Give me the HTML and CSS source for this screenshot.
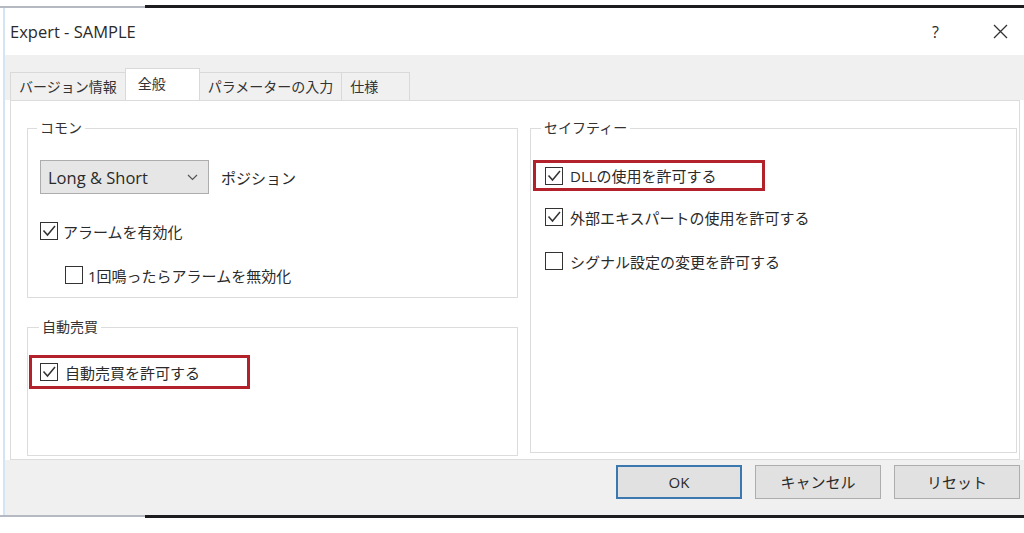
FILE: index.html
```html
<!DOCTYPE html>
<html lang="ja">
<head>
<meta charset="UTF-8">
<meta name="viewport" content="width=device-width, initial-scale=1.0">
<title>Expert - SAMPLE</title>
<link rel="stylesheet" href="styles.css">
</head>
<body>
  <div class="screen-edge top"><span class="seg-light"></span><span class="seg-dark"></span></div>

  <div class="dialog">
    <div class="titlebar">
      <span class="title">Expert - SAMPLE</span>
      <span class="tb-help">?</span>
      <svg class="tb-close" width="15" height="15" viewBox="0 0 15 15">
        <path d="M1 1 L14 14 M14 1 L1 14" stroke="#333" stroke-width="1.3" fill="none"/>
      </svg>
    </div>

    <div class="tabs">
      <div class="tab">バージョン情報</div>
      <div class="tab active">全般</div>
      <div class="tab">パラメーターの入力</div>
      <div class="tab">仕様</div>
    </div>

    <div class="panel">
      <div class="col-left">
        <fieldset class="group common">
          <legend>コモン</legend>
          <div class="select-row">
            <div class="select">
              <span>Long &amp; Short</span>
              <svg width="11" height="7" viewBox="0 0 11 7"><path d="M1 1 L5.5 5.5 L10 1" stroke="#555" stroke-width="1.2" fill="none"/></svg>
            </div>
            <span class="select-label">ポジション</span>
          </div>
          <div class="row first">
            <svg class="cb" width="18" height="18" viewBox="0 0 18 18"><rect x="0.5" y="0.5" width="17" height="17" fill="#fff" stroke="#333"/><path d="M3.5 8.5 L7.5 13 L15 4" stroke="#333" stroke-width="1.5" fill="none"/></svg>
            <span>アラームを有効化</span>
          </div>
          <div class="row sub">
            <svg class="cb" width="18" height="18" viewBox="0 0 18 18"><rect x="0.5" y="0.5" width="17" height="17" fill="#fff" stroke="#333"/></svg>
            <span>1回鳴ったらアラームを無効化</span>
          </div>
        </fieldset>

        <fieldset class="group auto">
          <legend>自動売買</legend>
          <div class="hl hl-auto">
            <svg class="cb" width="18" height="18" viewBox="0 0 18 18"><rect x="0.5" y="0.5" width="17" height="17" fill="#fff" stroke="#333"/><path d="M3.5 8.5 L7.5 13 L15 4" stroke="#333" stroke-width="1.5" fill="none"/></svg>
            <span>自動売買を許可する</span>
          </div>
        </fieldset>
      </div>

      <fieldset class="group safety">
        <legend>セイフティー</legend>
        <div class="hl hl-dll">
          <svg class="cb" width="18" height="18" viewBox="0 0 18 18"><rect x="0.5" y="0.5" width="17" height="17" fill="#fff" stroke="#333"/><path d="M3.5 8.5 L7.5 13 L15 4" stroke="#333" stroke-width="1.5" fill="none"/></svg>
          <span>DLLの使用を許可する</span>
        </div>
        <div class="row second">
          <svg class="cb" width="18" height="18" viewBox="0 0 18 18"><rect x="0.5" y="0.5" width="17" height="17" fill="#fff" stroke="#333"/><path d="M3.5 8.5 L7.5 13 L15 4" stroke="#333" stroke-width="1.5" fill="none"/></svg>
          <span>外部エキスパートの使用を許可する</span>
        </div>
        <div class="row third">
          <svg class="cb" width="18" height="18" viewBox="0 0 18 18"><rect x="0.5" y="0.5" width="17" height="17" fill="#fff" stroke="#333"/></svg>
          <span>シグナル設定の変更を許可する</span>
        </div>
      </fieldset>
    </div>

    <div class="footer">
      <div class="btn default">OK</div>
      <div class="btn">キャンセル</div>
      <div class="btn">リセット</div>
    </div>
  </div>

  <div class="screen-edge bottom"><span class="seg-light"></span><span class="seg-dark"></span></div>
</body>
</html>
```

FILE: styles.css
```css
body {
  margin: 0;
  width: 1024px;
  height: 533px;
  overflow: hidden;
  background: #fff;
  font-family: "Open Sans", "Noto Sans CJK JP", sans-serif;
  color: #2a2a2a;
}

/* strips of the desktop above and below the dialog */
.screen-edge {
  display: flex;
}
.screen-edge.top {
  height: 8px;
  align-items: flex-end;
}
.screen-edge.bottom {
  height: 18px;
  align-items: flex-start;
}
.seg-light {
  width: 145px;
  height: 2px;
  background: #b4b9c2;
}
.seg-dark {
  flex: 1;
  height: 3px;
  background: #1d1d1f;
}

.dialog {
  margin-left: 3px;
  border-left: 2px solid #d3e5f2;
}

.titlebar {
  height: 47px;
  background: #fff;
  display: flex;
  align-items: center;
  padding: 0 16px 0 5px;
  font-size: 16.5px;
}
.tb-help {
  margin-left: auto;
  margin-right: 54px;
  font-size: 16px;
}

.tabs {
  height: 45px;
  background: #f0f0f0;
  display: flex;
  align-items: flex-end;
  padding-left: 5px;
}
.tab {
  box-sizing: border-box;
  height: 28px;
  min-width: 69px;
  padding: 0 8px;
  margin-right: -1px;
  border: 1px solid #d9d9d9;
  border-bottom: none;
  background: #f0f0f0;
  font-size: 14px;
  line-height: 27px;
  color: #333;
}
.tab.active {
  height: 32px;
  min-width: 75px;
  padding-left: 12px;
  background: #fff;
  line-height: 30px;
  position: relative;
  z-index: 1;
}

.panel {
  box-sizing: border-box;
  height: 360px;
  margin: 0 4px 0 5px;
  padding: 17px 0 0 16px;
  background: #fff;
  border: 1px solid #dcdcdc;
  display: flex;
  gap: 12px;
}
.col-left {
  width: 491px;
  display: flex;
  flex-direction: column;
}

.group {
  box-sizing: border-box;
  margin: 0;
  min-width: 0;
  border: 1px solid #dcdcdc;
  padding: 0;
}
.group legend {
  font-size: 14px;
  line-height: 20px;
  padding: 0 3px;
  color: #333;
}

.common {
  height: 180px;
  padding: 22px 0 0 12px;
}
.common legend {
  margin-left: -3px;
}
.auto {
  height: 139px;
  margin-top: 19px;
  padding: 18px 0 0 1px;
}
.auto legend {
  margin-left: 10px;
}
.safety {
  width: 487px;
  height: 335px;
  padding: 22px 0 0 2px;
}
.safety legend {
  margin-left: 8px;
}

.select-row {
  display: flex;
  align-items: center;
}
.select {
  box-sizing: border-box;
  width: 169px;
  height: 34px;
  padding: 0 10px 0 7px;
  background: #e6e6e6;
  border: 1px solid #adadad;
  display: flex;
  align-items: center;
  justify-content: space-between;
  font-size: 16.5px;
}
.select-label {
  margin-left: 12px;
  font-size: 15px;
}

.row {
  height: 18px;
  display: flex;
  align-items: center;
  gap: 5px;
  font-size: 15px;
}
.row.first { margin-top: 28px; }
.row.sub { margin-top: 26px; margin-left: 25px; }
.row.second { margin-top: 17px; margin-left: 12px; gap: 7px; }
.row.third { margin-top: 26px; margin-left: 12px; gap: 7px; }

.cb {
  flex: none;
}

/* red highlight boxes drawn in the screenshot */
.hl {
  box-sizing: border-box;
  display: flex;
  align-items: center;
  gap: 7px;
  border: 3px solid #b3222b;
  font-size: 15px;
}
.hl-auto {
  width: 221px;
  height: 34px;
  padding-left: 8px;
}
.hl-dll {
  width: 232px;
  height: 31px;
  padding-left: 9px;
}

.footer {
  box-sizing: border-box;
  height: 55px;
  background: #f0f0f0;
  display: flex;
  justify-content: flex-end;
  align-items: flex-start;
  gap: 13px;
  padding: 5px 4px 0 0;
}
.btn {
  box-sizing: border-box;
  width: 126px;
  height: 34px;
  background: #e1e1e1;
  border: 1px solid #adadad;
  text-align: center;
  line-height: 32px;
  font-size: 15px;
}
.btn.default {
  border: 2px solid #3b78b0;
  line-height: 30px;
}
```
